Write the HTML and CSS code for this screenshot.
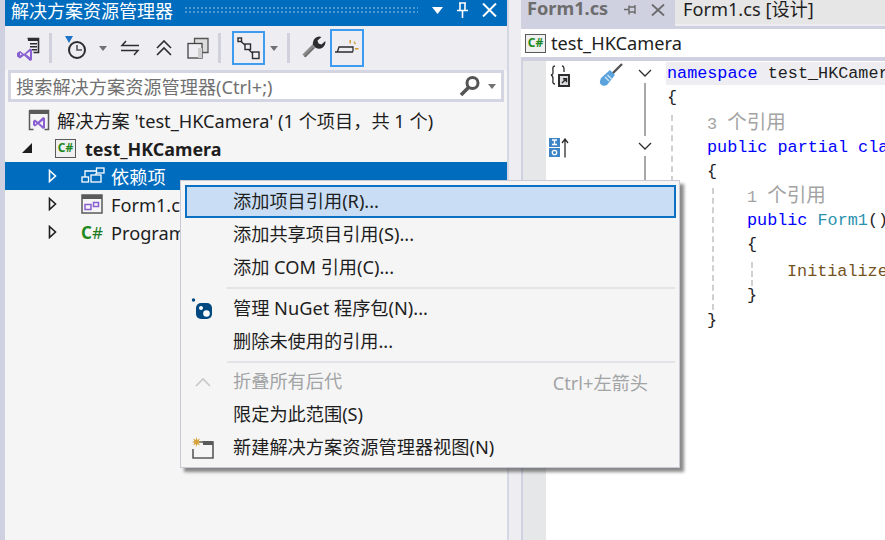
FILE: index.html
```html
<!DOCTYPE html>
<html lang="zh">
<head>
<meta charset="utf-8">
<title>解决方案资源管理器</title>
<link rel="stylesheet" href="styles.css">
</head>
<body>
<div class="app">
  <section class="panel">
    <header class="titlebar">
      <span class="title">解决方案资源管理器</span>
      <span class="grip"></span>
      <span class="tb-actions">
        <svg width="11" height="7" viewBox="0 0 11 7"><path d="M0 0h11L5.500 7z" fill="#fff"/></svg>
        <svg width="11" height="16" viewBox="0 0 11 16"><path d="M2 1h7M3 1v7M8 1v7M0 8.500h11M5.500 9v7" fill="none" stroke="#fff" stroke-width="1.600"/></svg>
        <svg width="15" height="14" viewBox="0 0 15 14"><path d="M1 .5l13 13M14 .5l-13 13" stroke="#fff" stroke-width="2"/></svg>
      </span>
    </header>
    <div class="toolbar">
      <span class="tool w-vs">
        <svg width="24" height="24" viewBox="0 0 24 24"><path d="M11.500 1.500h11v14h-5" fill="none" stroke="#2d2d30" stroke-width="1.600"/><path d="M12 1h11v3H12zM14 6h7v1.400h-7zM14 9h7v1.400h-7zM16 12h5v1.400h-5z" fill="#2d2d30"/><path d="M1 16l3-2 4 3 6-5.500 2 1v10.500l-2 1-6-5.500-4 3-3-2zM4 16v2.500l2-1.200zM10 17.300l4 3v-6z" fill="#8a5fd1" fill-rule="evenodd"/></svg>
      </span>
      <span class="vsep"></span>
      <span class="tool w-clock">
        <svg width="24" height="24" viewBox="0 0 24 24"><path d="M1 0h8L5 7z" fill="#1e74c8"/><circle cx="13" cy="14" r="8" fill="none" stroke="#2d2d30" stroke-width="2"/><path d="M13 9v5h5" fill="none" stroke="#555" stroke-width="1.600"/></svg>
      </span>
      <span class="caret"></span>
      <span class="tool w-sync">
        <svg width="20" height="16" viewBox="0 0 20 16"><path d="M6 1L2 5.500h17M14 15l4-4.500H1" fill="none" stroke="#2d2d30" stroke-width="1.500"/></svg>
      </span>
      <span class="tool w-collapse">
        <svg width="18" height="16" viewBox="0 0 18 16"><path d="M2 8l7-7 7 7M2 15l7-7 7 7" fill="none" stroke="#2d2d30" stroke-width="1.600"/></svg>
      </span>
      <span class="tool w-copies">
        <svg width="22" height="22" viewBox="0 0 22 22"><path d="M7 1h14v14H15V7H7z" fill="#dcdcdc"/><path d="M7.500 6V1.500h13.500v14H15.500" fill="none" stroke="#555" stroke-width="1.300"/><rect x="1" y="6.500" width="14" height="14.500" fill="#efeff3" stroke="#444" stroke-width="1.300"/><path d="M11 11h4v10h-4z" fill="#cfcfcf"/></svg>
      </span>
      <span class="vsep sep-b"></span>
      <span class="tool boxed box-tree">
        <svg width="24" height="23" viewBox="0 0 24 23"><g fill="#efeff3" stroke="#2d2d30" stroke-width="1.400"><path d="M3.500 4l5 4.500M12 13l5 4.500" fill="none"/><rect x="1" y="1" width="3.500" height="3.500"/><rect x="8" y="7" width="5.500" height="5.500"/><rect x="15.500" y="15" width="6.500" height="6.500"/></g></svg>
      </span>
      <span class="caret caret-b"></span>
      <span class="vsep sep-c"></span>
      <span class="tool w-wrench">
        <svg width="24" height="24" viewBox="0 0 24 24"><path d="M2 20L13 9" stroke="#8a8a8a" stroke-width="4.500"/><path d="M2.500 21l9-9" stroke="#555" stroke-width="1"/><path d="M11 8.500a6.500 6.500 0 0 1 8.500-7.500l-4 3.500 1 3 3 1 3.800-3.500A6.500 6.500 0 0 1 14 12z" fill="#2d2d30"/></svg>
      </span>
      <span class="tool boxed box-prev">
        <svg width="26" height="20" viewBox="0 0 26 20"><path d="M1 14h18M3.500 13.500l1.500-4.500h14v4.500" fill="none" stroke="#2d2d30" stroke-width="1.300"/><path d="M15.500 2h1.400v3.500h-1.400zM19.500 4l1-.8 1.500 2.500-1 .7zM21 10h3.500v1.400H21z" fill="#cf9a2e"/></svg>
      </span>
    </div>
    <div class="search">
      <span class="search-text">搜索解决方案资源管理器(Ctrl+;)</span>
      <svg class="search-icon" width="22" height="22" viewBox="0 0 22 22"><circle cx="13.500" cy="8" r="5.500" fill="none" stroke="#555" stroke-width="3"/><path d="M9.500 12.500L2 20" stroke="#555" stroke-width="3.500"/></svg>
      <span class="caret caret-s"></span>
    </div>
    <ul class="tree">
      <li class="row lvl-sln">
        <svg class="ticon" width="22" height="22" viewBox="0 0 22 22"><path d="M1.500 1.500h19v19h-4M1.500 1.500v19h4" fill="#f5f5f5" stroke="#5a5a5a" stroke-width="1.500"/><path d="M1 1h20v4H1z" fill="#5a5a5a"/><path d="M5 12l2-1.500 3 2.300 5-4.800 2 1v10l-2 1-5-4.800-3 2.300-2-1.500zM7 13v2.500l1.500-1.200zM11.500 14.300l3.500 2.700v-5.400z" fill="#8a5fd1" fill-rule="evenodd"/></svg>
        <span class="label">解决方案 'test_HKCamera' (1 个项目，共 1 个)</span>
      </li>
      <li class="row lvl-prj">
        <svg class="arrow-open" width="12" height="12" viewBox="0 0 12 12"><path d="M11 1v10H1z" fill="#1e1e1e"/></svg>
        <span class="csbox">C#</span>
        <span class="label strong">test_HKCamera</span>
      </li>
      <li class="row lvl-item selected">
        <svg class="arrow" width="9" height="14" viewBox="0 0 9 14"><path d="M1.500 1.500L7.500 7l-6 5.500z" fill="none" stroke="#fff" stroke-width="1.600"/></svg>
        <svg class="ticon" width="24" height="18" viewBox="0 0 24 18"><g fill="none" stroke="#fff" stroke-width="1.300"><rect x="1" y="10" width="6.500" height="5"/><rect x="10" y="8" width="10" height="7"/><rect x="15.500" y="1" width="7.500" height="5"/><path d="M4 10V4h11.500M15 8V6"/></g></svg>
        <span class="label label-deps">依赖项</span>
      </li>
      <li class="row lvl-item">
        <svg class="arrow" width="9" height="14" viewBox="0 0 9 14"><path d="M1.500 1.500L7.500 7l-6 5.500z" fill="none" stroke="#1e1e1e" stroke-width="1.600"/></svg>
        <svg class="ticon" width="22" height="20" viewBox="0 0 22 20"><rect x="1" y="1" width="20" height="18" fill="#f5f5f5" stroke="#5a5a5a" stroke-width="1.500"/><path d="M1 1h20v4H1z" fill="#5a5a5a"/><rect x="4" y="10.500" width="6" height="5" fill="none" stroke="#8a5fd1" stroke-width="1.500"/><rect x="12.500" y="8.500" width="5" height="4" fill="none" stroke="#8a5fd1" stroke-width="1.500"/></svg>
        <span class="label">Form1.cs</span>
      </li>
      <li class="row lvl-item">
        <svg class="arrow" width="9" height="14" viewBox="0 0 9 14"><path d="M1.500 1.500L7.500 7l-6 5.500z" fill="none" stroke="#1e1e1e" stroke-width="1.600"/></svg>
        <span class="ticon csharp">C<span class="hash">#</span></span>
        <span class="label">Program.cs</span>
      </li>
    </ul>
  </section>

  <section class="editor">
    <div class="tabs">
      <span class="tab active">
        <span class="tab-name">Form1.cs</span>
        <svg width="14" height="12" viewBox="0 0 14 12"><path d="M5 1.500v9M5 3h6v5H5M0 5.500h5M11 1v9" fill="none" stroke="#6a6a6a" stroke-width="1.400"/></svg>
        <svg width="14" height="12" viewBox="0 0 14 12"><path d="M1 .5l12 11M13 .5l-12 11" stroke="#6a6a6a" stroke-width="1.800"/></svg>
      </span>
      <span class="tab inactive"><span class="tab-name">Form1.cs [设计]</span></span>
    </div>
    <div class="navbar">
      <span class="csbox csbox-nav">C#</span>
      <span class="nav-text">test_HKCamera</span>
    </div>
    <div class="editor-body">
      <div class="gutter"></div>
      <div class="glyphs">
        <div class="glyph-row">
          <svg width="24" height="24" viewBox="0 0 24 24"><path d="M7 1C4 1 5 4 5 6.500S5 9.500 3 10c2 .5 2 2 2 4s-1 5 2 5M14 1c2.500 0 2 3.500 2 6" fill="none" stroke="#2d2d30" stroke-width="1.300"/><rect x="10" y="9" width="12" height="13" fill="#2d2d30"/><rect x="12" y="11" width="8" height="9" fill="#dcdcdc"/><path d="M14 18l4-4M15 13.800h3.500v3.500" fill="none" stroke="#2d2d30" stroke-width="1.500"/></svg>
          <svg class="glyph-driver" width="26" height="26" viewBox="0 0 26 26"><path d="M14 12L24 2" stroke="#555" stroke-width="2.400"/><path d="M3 16l9-8 5 5-8 10c-3 2-8 0-7-4z" fill="#5aa3dc"/><path d="M7 15l4 4M9.500 13l4 4" stroke="#cfe4f5" stroke-width="1.400"/></svg>
        </div>
        <div class="glyph-row">
          <svg width="22" height="20" viewBox="0 0 22 20"><path d="M1 0h11v9H1zM1 10h11v9H1z" fill="#3d85c6"/><path d="M4 2h5M6.500 2v4.500M4 6.500h5" stroke="#fff" stroke-width="1.300"/><circle cx="6.500" cy="14.500" r="2.200" fill="none" stroke="#fff" stroke-width="1.300"/><path d="M17 19.500V1M14 5l3-4 3 4" fill="none" stroke="#2d2d30" stroke-width="1.300"/></svg>
        </div>
      </div>
      <div class="fold">
        <svg width="14" height="8" viewBox="0 0 14 8"><path d="M1 1l6 6 6-6" fill="none" stroke="#2d2d30" stroke-width="1.300"/></svg>
        <span class="fold-line"></span>
        <svg width="14" height="8" viewBox="0 0 14 8"><path d="M1 1l6 6 6-6" fill="none" stroke="#2d2d30" stroke-width="1.300"/></svg>
        <span class="fold-line long"></span>
      </div>
      <div class="code">
        <span class="guide g1"></span>
        <span class="guide g2"></span>
        <span class="guide g3"></span>
        <div class="line current"><span class="kw">namespace</span> test_HKCamera</div>
        <div class="line">{</div>
        <div class="line lens lens-class in1">3 <span class="lens-cjk">个引用</span></div>
        <div class="line in1"><span class="kw">public</span> <span class="kw">partial</span> <span class="kw">class</span> <span class="ty">Form1</span></div>
        <div class="line in1">{</div>
        <div class="line lens lens-ctor in2">1 <span class="lens-cjk">个引用</span></div>
        <div class="line in2"><span class="kw">public</span> <span class="ty">Form1</span>()</div>
        <div class="line in2">{</div>
        <div class="line in3"><span class="fn">InitializeComponent</span>();</div>
        <div class="line in2">}</div>
        <div class="line in1">}</div>
      </div>
    </div>
  </section>
</div>

<div class="menu">
  <div class="mi hot"><span class="mi-icon"></span><span class="mi-text">添加项目引用(R)...</span></div>
  <div class="mi"><span class="mi-icon"></span><span class="mi-text">添加共享项目引用(S)...</span></div>
  <div class="mi"><span class="mi-icon"></span><span class="mi-text">添加 COM 引用(C)...</span></div>
  <div class="msep"></div>
  <div class="mi">
    <span class="mi-icon">
      <svg width="24" height="24" viewBox="0 0 24 24"><rect x="5" y="6" width="16" height="16" rx="5" fill="#004880"/><circle cx="2.500" cy="3" r="1.700" fill="#004880"/><circle cx="10" cy="11" r="2" fill="#fff"/><circle cx="15.500" cy="16.500" r="3.300" fill="#fff"/></svg>
    </span>
    <span class="mi-text">管理 NuGet 程序包(N)...</span>
  </div>
  <div class="mi"><span class="mi-icon"></span><span class="mi-text">删除未使用的引用...</span></div>
  <div class="msep msep-b"></div>
  <div class="mi disabled">
    <span class="mi-icon">
      <svg width="18" height="12" viewBox="0 0 18 12"><path d="M2 10l7-7 7 7" fill="none" stroke="#c8c8c8" stroke-width="1.600"/></svg>
    </span>
    <span class="mi-text">折叠所有后代</span>
    <span class="mi-key">Ctrl+左箭头</span>
  </div>
  <div class="mi"><span class="mi-icon"></span><span class="mi-text">限定为此范围(S)</span></div>
  <div class="mi">
    <span class="mi-icon">
      <svg width="24" height="24" viewBox="0 0 24 24"><path d="M8 6h14v16H2v-9" fill="#f5f5f5" stroke="#5a5a5a" stroke-width="1.600"/><path d="M12 5h10v4H12z" fill="#5a5a5a"/><path d="M5.500 1l.8 3 2.700-1.500-1.500 2.700 3 .8-3 .8 1.500 2.700-2.700-1.500-.8 3-.8-3L2 9.500l1.500-2.700-3-.8 3-.8L2 2.500l2.700 1.500z" fill="#d6a23a"/></svg>
    </span>
    <span class="mi-text">新建解决方案资源管理器视图(N)</span>
  </div>
</div>
</body>
</html>
```

FILE: styles.css
```css
* { box-sizing: border-box; }
html, body { margin: 0; padding: 0; height: 100%; overflow: hidden; }
body {
  background: #eeeef2;
  color: #1e1e1e;
  font-family: "Noto Sans", "Noto Sans CJK SC", sans-serif;
  font-size: 18.200px;
  position: relative;
}
svg { display: block; flex: none; }

.app {
  display: flex;
  width: 885px;
  height: 540px;
  padding-left: 5px;
  background: linear-gradient(to right, #cfd0e0 5px, #eeeef2 5px);
}

/* left panel */
.panel {
  width: 504px;
  flex: none;
  border-right: 2px solid #d6d7e4;
  background: #f5f5f5;
  display: flex;
  flex-direction: column;
}
.titlebar {
  height: 26px;
  background: #006cbe;
  color: #fff;
  display: flex;
  align-items: center;
  padding: 0 10px 6px 6px;
  font-size: 18px;
}
.title { font-family: "Noto Sans CJK SC", sans-serif; white-space: nowrap; line-height: 20px; margin-bottom: 1px; }
.grip {
  flex: 1;
  height: 8px;
  margin: 0 14px 0 11px;
  background-image: radial-gradient(circle, #4c97d4 1px, transparent 1.200px);
  background-size: 4px 4px;
}
.tb-actions { display: flex; align-items: center; gap: 14px; }

.toolbar {
  height: 44px;
  background: #eeeef2;
  display: flex;
  align-items: center;
  padding-left: 11px;
}
.tool { display: flex; align-items: center; justify-content: center; flex: none; }
.w-vs { width: 24px; margin-top: 1px; }
.vsep { width: 3px; height: 30px; background: #d0d1dc; margin: 0 12px 0 9px; flex: none; }
.w-clock { width: 24px; }
.caret {
  width: 0; height: 0; flex: none;
  border-left: 4.500px solid transparent;
  border-right: 4.500px solid transparent;
  border-top: 5px solid #717171;
  margin-left: 11px;
}
.w-sync { width: 20px; margin-left: 13px; }
.w-collapse { width: 18px; margin-left: 15px; }
.w-copies { width: 22px; margin-left: 14px; }
.sep-b { margin: 0 11px 0 9px; }
.boxed { border: 2px solid #3d9bf0; }
.box-tree { width: 33px; height: 34px; }
.caret-b { margin-left: 5px; }
.sep-c { margin: 0 12px 0 9px; }
.w-wrench { width: 24px; }
.box-prev { width: 34px; height: 38px; margin-left: 4px; }

.search {
  height: 32px;
  margin: 0 3px;
  border: 3px solid #d4d5e2;
  background: #fff;
  display: flex;
  align-items: center;
  padding: 0 5px;
}
.search-text { flex: 1; color: #717171; white-space: nowrap; }
.search-icon { margin-right: 7px; }
.caret-s { margin-left: 0; }

.tree { list-style: none; margin: 4px 0 0; padding: 0; }
.row { height: 28px; display: flex; align-items: center; white-space: nowrap; overflow: hidden; }
.label { line-height: 26px; padding-top: 2px; }
.strong { font-weight: 700; font-size: 17.900px; }
.lvl-sln { padding-left: 23px; }
.lvl-sln .label { margin-left: 7px; }
.lvl-prj { padding-left: 16px; }
.lvl-prj .label { margin-left: 9px; }
.arrow-open { margin-right: 22px; }
.lvl-item { padding-left: 43px; }
.arrow { margin-right: 24px; }
.lvl-item .label { margin-left: 8px; }
.lvl-item .label-deps { margin-left: 6px; }
.selected { background: #006cbe; color: #fff; }
.ticon { flex: none; }
.csharp {
  width: 22px;
  color: #1f8a1f;
  font-weight: 700;
  font-size: 17px;
  line-height: 1;
}
.hash { font-weight: 400; color: #1e7a1e; }
.csbox {
  width: 21px; height: 19px;
  border: 1.500px solid #5a5a5a;
  background: #f0f0f0;
  color: #1f8a1f;
  font-weight: 700;
  font-size: 12px;
  line-height: 16px;
  text-align: center;
  flex: none;
}

/* editor */
.editor { flex: 1; min-width: 0; padding-left: 12px; display: flex; flex-direction: column; overflow: hidden; }
.tabs { height: 26px; display: flex; flex: none; }
.tab { height: 26px; display: flex; align-items: center; white-space: nowrap; padding-bottom: 6px; }
.active { width: 154px; background: #cfd0e0; padding-left: 6px; gap: 13px; color: #6d6d6d; font-weight: 700; }
.tab-name { margin-right: 3px; line-height: 20px; margin-bottom: 5px; }
.inactive { flex: 1; height: 24px; background: #e6e6e6; padding-left: 8px; padding-bottom: 1px; color: #1e1e1e; }
.tabs + .navbar { margin-top: 3px; }
.navbar {
  height: 28px; background: #fff;
  display: flex; align-items: center; padding-left: 4px; flex: none;
  box-shadow: 0 -3px 0 #cfd0e0;
}
.csbox-nav { margin-right: 5px; }
.nav-text { line-height: 26px; margin-bottom: 1px; }
.editor-body {
  flex: 1;
  display: flex;
  background: #fff;
  border-top: 4px solid #cfd0e0;
  min-height: 0;
}
.gutter { width: 25px; background: #e6e7e8; border-left: 2px solid #cfd0e0; flex: none; }
.glyphs { width: 87px; flex: none; }
.glyph-row { height: 73px; display: flex; align-items: flex-start; padding-top: 4px; padding-left: 2px; gap: 26px; }
.glyph-driver { margin-top: -3px; }
.fold { width: 18px; flex: none; display: flex; flex-direction: column; align-items: center; padding-top: 8px; margin-left: 3px; margin-right: 12px; }
.fold-line { width: 2px; height: 53px; background: #a8a8a8; margin: 6px 0; flex: none; }
.fold-line.long { height: 300px; }
.code {
  flex: 1;
  position: relative;
  font-family: "Liberation Mono", monospace;
  font-size: 16.800px;
  min-width: 0;
  overflow: hidden;
}
.line { height: 24.600px; line-height: 24px; white-space: pre; color: #1e1e1e; padding-left: 1px; }
.current { background: #eeeef2; height: 23px; margin-top: 1px; margin-bottom: .600px; }
.in1 { padding-left: 41px; }
.in2 { padding-left: 81px; }
.in3 { padding-left: 121px; margin-top: 2px; }
.lens { color: #a3a3a3; line-height: 20px; }
.lens-class { margin-top: 1px; }
.lens-ctor { margin-top: -1px; }
.lens-cjk { font-family: "Noto Sans CJK SC", sans-serif; font-size: 19.500px; line-height: 1; }
.kw { color: #0000ff; }
.ty { color: #2b91af; }
.fn { color: #74531f; }
.guide { position: absolute; width: 2px; border-left: 2px dashed #d0d0d0; }
.g1 { left: 5px; top: 54px; height: 230px; }
.g2 { left: 46px; top: 127px; height: 122px; }
.g3 { left: 85px; top: 201px; height: 24px; }

/* context menu */
.menu {
  position: absolute;
  left: 180px;
  top: 180px;
  width: 500px;
  height: 288px;
  background: #f5f5f5;
  border: 1px solid #c9cad6;
  padding: 4px 3px 2px 4px;
  box-shadow: 4px 4px 3px rgba(60, 60, 60, .6);
  display: flex;
  flex-direction: column;
}
.mi { height: 33px; flex: none; display: flex; align-items: center; white-space: nowrap; }
.mi-icon { width: 48px; flex: none; display: flex; justify-content: center; align-items: center; }
.mi-icon svg { margin-left: -13px; }
.mi-text { flex: 1; color: #1e1e1e; line-height: 33px; }
.hot { background: #c9def5; box-shadow: inset 0 0 0 2px #0e70c0; }
.disabled .mi-text, .mi-key { color: #a2a4a5; }
.mi-key { margin-right: 28px; }
.msep { height: 8px; flex: none; margin-left: 42px; margin-right: 1px; display: flex; align-items: center; }
.msep::after { content: ""; flex: 1; height: 2px; background: #e3e3e8; }
.msep-b { height: 7px; }
```
